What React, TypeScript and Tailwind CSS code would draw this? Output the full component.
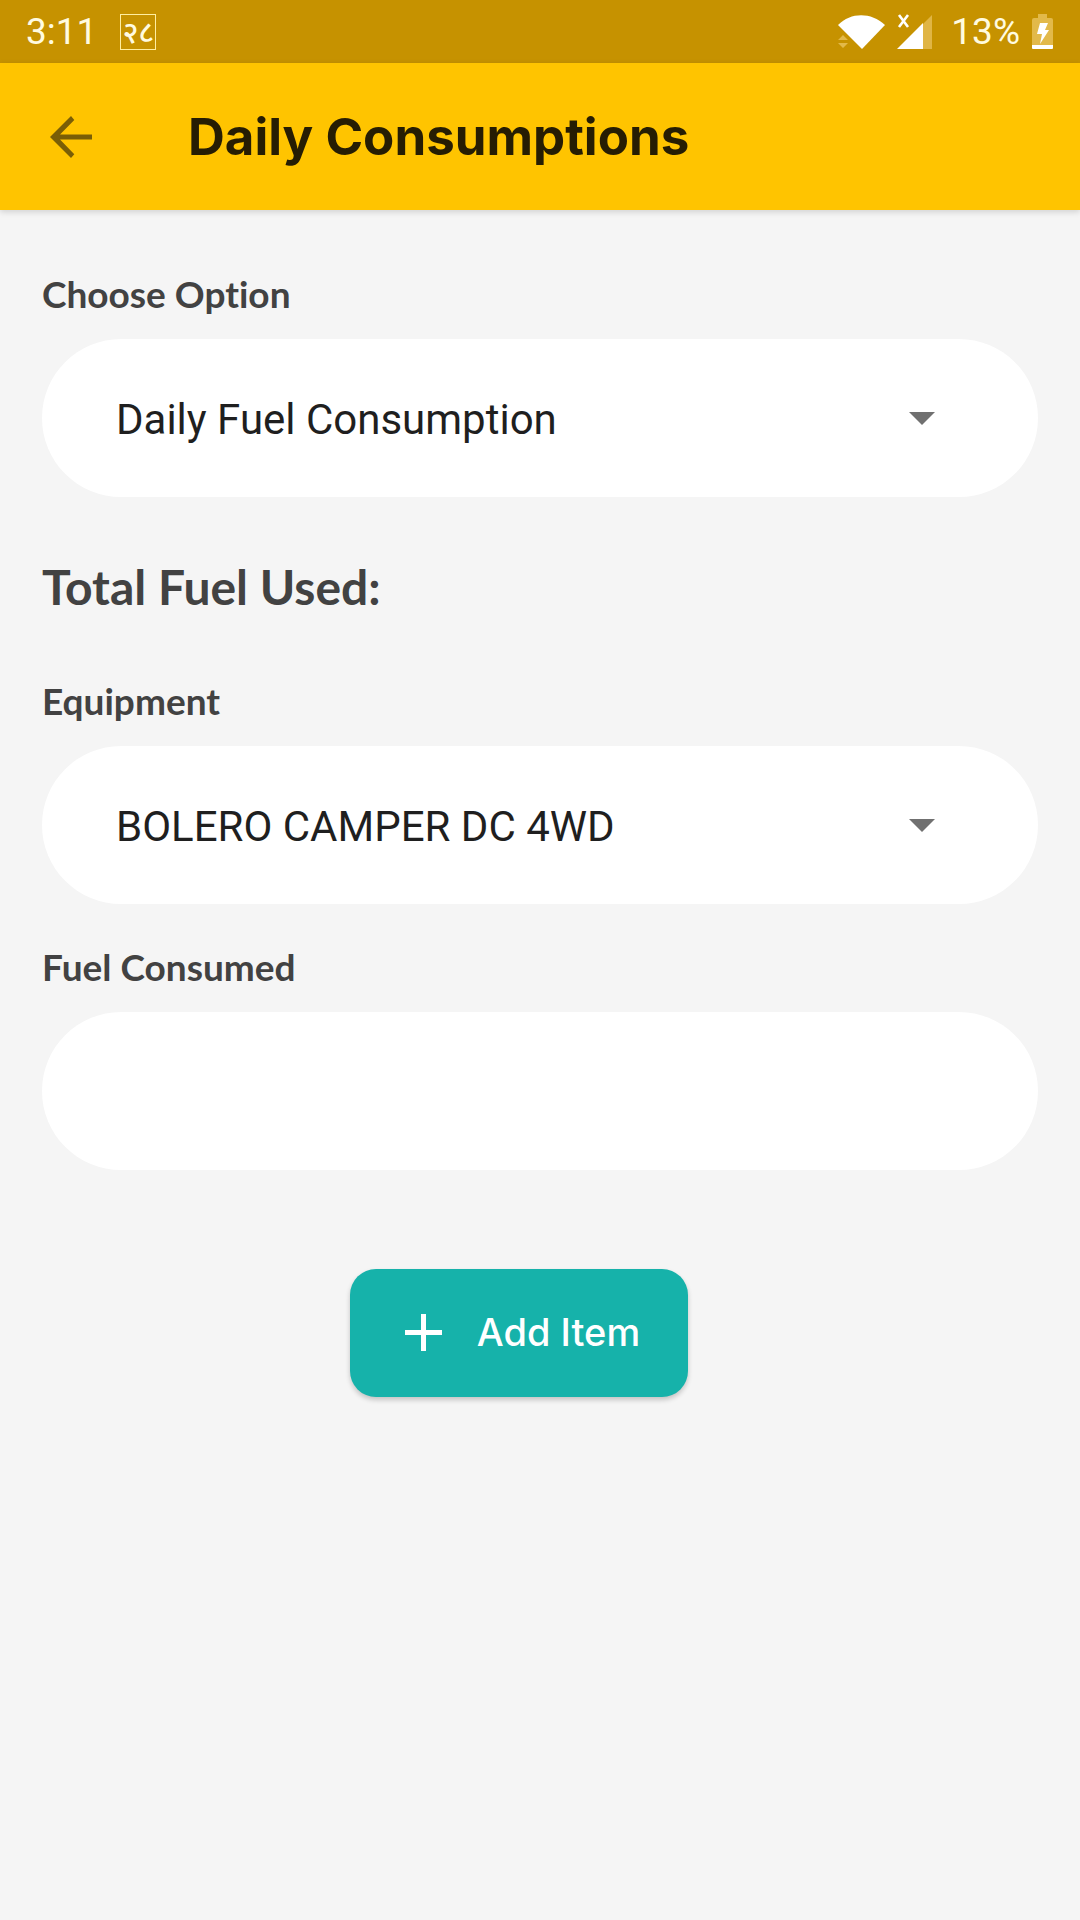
import type { ReactNode } from "react";

const labelClass =
  "block font-['Lato'] text-[37px] leading-[44px] font-bold text-[#424242] [font-variant-ligatures:none]";
const fieldClass =
  "block h-[158px] w-full appearance-none rounded-full border-0 bg-white px-[74px] pt-[2px] font-['Roboto'] text-[42px] text-[#1f1f1f] outline-none";

function StatusBar() {
  return (
    <div className="flex h-[63px] items-center justify-between bg-[#c69200] pr-[27px] pl-[26px] font-['Roboto'] text-[37px] leading-[44px] text-[#fffbe0]">
      <div className="flex items-center gap-[23px]">
        <span>3:11</span>
        <span className="flex size-9 items-center justify-center border border-[#ffeea0] font-['Noto_Sans',sans-serif] text-[30px] leading-none font-medium">
          २८
        </span>
      </div>
      <div className="flex items-center">
        <svg className="h-[36px] w-[48px]" viewBox="0 0 48 36" aria-label="Wi-Fi">
          <path d="M1 11C14-2 34-2 48 11L25 35Z" fill="#fff" />
          <path d="M1 26l5-5 5 5zM1 29h10l-5 5z" fill="#e2b94a" />
        </svg>
        <svg className="ml-3 h-[36px] w-[36px]" viewBox="0 0 36 36" aria-label="No signal">
          <path d="M35 1V35H26V10Z" fill="#e0b544" />
          <path d="M0 35L26 9V35Z" fill="#fff" />
          <path d="M2 1L11 13M11 1L2 13" stroke="#fff" strokeWidth="2.6" />
        </svg>
        <span className="ml-[18px]">13%</span>
        <svg className="ml-[12px] h-[36px] w-[21px]" viewBox="0 0 21 36" aria-label="Battery charging">
          <path d="M6 0h9v4h4q2 0 2 2v25H0V6q0-2 2-2h4z" fill="#e2b94a" />
          <path d="M0 31h21v3q0 1-1 1H1q-1 0-1-1z" fill="#fff" />
          <path d="M8 9h8l-3 7h4L8 30l2-10H5z" fill="#fff" />
        </svg>
      </div>
    </div>
  );
}

function SelectField({ id, label, value }: { id: string; label: string; value: string }) {
  return (
    <Field id={id} label={label}>
      <div className="relative">
        <select id={id} defaultValue={value} className={fieldClass}>
          <option>{value}</option>
        </select>
        <svg
          className="pointer-events-none absolute top-[73px] right-[103px] h-[13px] w-[26px]"
          viewBox="0 0 26 13"
          aria-hidden="true"
        >
          <path d="M0 0H26L13 13Z" fill="#707070" />
        </svg>
      </div>
    </Field>
  );
}

function Field({ id, label, children }: { id: string; label: string; children: ReactNode }) {
  return (
    <div className="flex flex-col gap-[23px]">
      <label htmlFor={id} className={labelClass}>
        {label}
      </label>
      {children}
    </div>
  );
}

export default function App() {
  return (
    <div className="min-h-screen bg-[#f5f5f5]">
      <StatusBar />
      <header className="flex h-[147px] items-center bg-[#ffc400] pl-[50px] shadow-[0_2px_6px_rgba(0,0,0,0.15)]">
        <button type="button" aria-label="Back">
          <svg className="size-[42px]" viewBox="0 0 42 42">
            <path
              d="M42 18.4H10L24.3 4.1 21 0 0 21 21 42 24.3 38.3 10 23.6H42Z"
              fill="#7a5e06"
            />
          </svg>
        </button>
        <h1 className="ml-[96px] font-['Inter'] text-[51px] leading-[64px] font-bold text-[#261d03]">
          Daily Consumptions
        </h1>
      </header>
      <main className="flex flex-col px-[42px] pt-[62px]">
        <SelectField id="option" label="Choose Option" value="Daily Fuel Consumption" />
        <h2 className="mt-[62px] font-['Lato'] text-[48px] leading-[56px] font-bold text-[#424242]">
          Total Fuel Used:
        </h2>
        <div className="mt-[64px] flex flex-col gap-[41px]">
          <SelectField id="equipment" label="Equipment" value="BOLERO CAMPER DC 4WD" />
          <Field id="fuel" label="Fuel Consumed">
            <input id="fuel" type="text" className={fieldClass} />
          </Field>
        </div>
        <button
          type="button"
          className="mt-[99px] mr-[42px] flex h-[128px] items-center gap-[35px] self-center rounded-[26px] bg-[#16b2aa] pr-[48px] pb-[2px] pl-[55px] font-['Inter'] text-[38px] font-medium text-white shadow-[0_3px_5px_rgba(0,0,0,0.2)]"
        >
          <svg className="size-[37px]" viewBox="0 0 37 37" aria-hidden="true">
            <path d="M0 18.5H37M18.5 0V37" stroke="#fff" strokeWidth="5" />
          </svg>
          Add Item
        </button>
      </main>
    </div>
  );
}
